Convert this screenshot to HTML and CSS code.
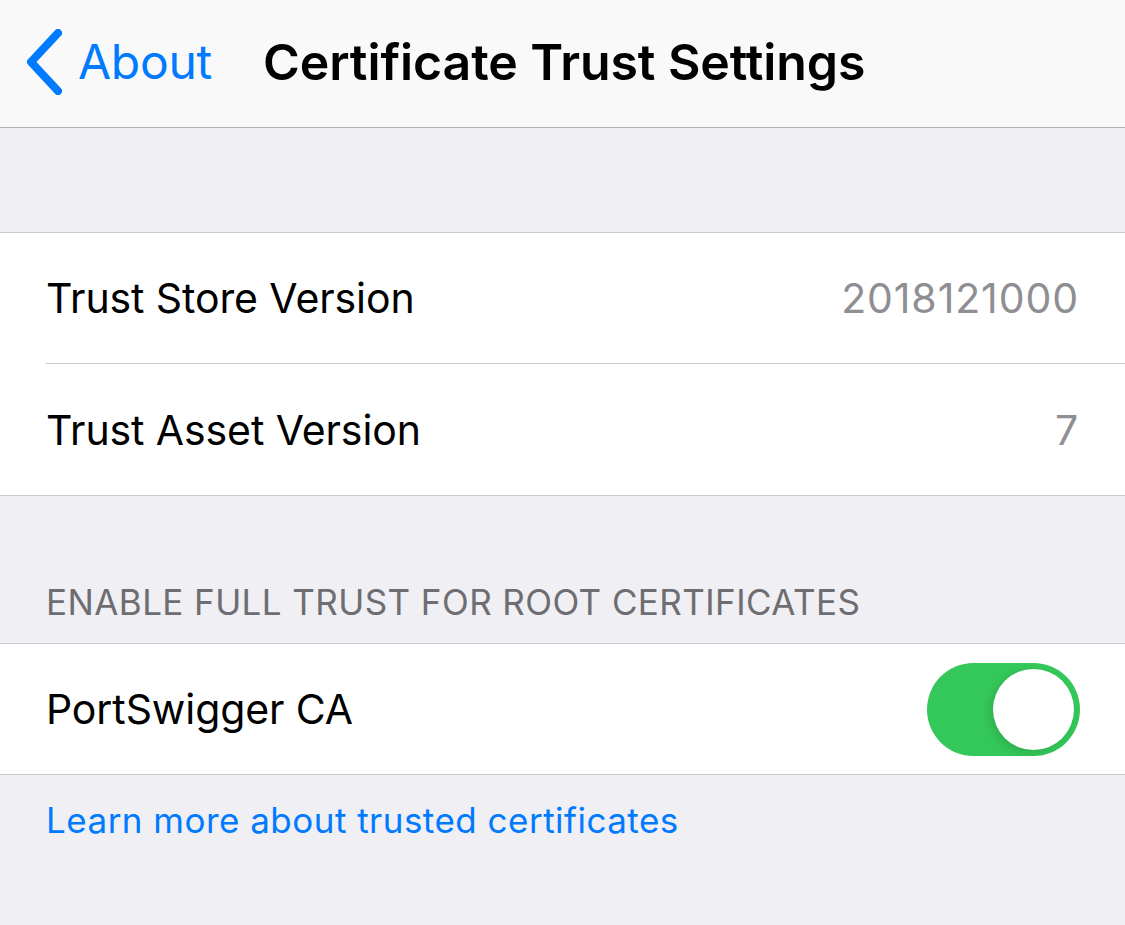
FILE: index.html
```html
<!DOCTYPE html>
<html>
<head>
<meta charset="utf-8">
<link rel="stylesheet" href="styles.css">
</head>
<body>
<header class="navbar">
  <div class="back">
    <svg class="chevron" width="40" height="66" viewBox="0 0 40 66">
      <path d="M33 4 L6 33 L33 62" fill="none" stroke="#007aff" stroke-width="8" stroke-linecap="round" stroke-linejoin="round"/>
    </svg>
    <span class="back-label">About</span>
  </div>
  <h1 class="title">Certificate Trust Settings</h1>
</header>
<div class="spacer-top"></div>
<section class="group">
  <div class="row">
    <span class="label">Trust Store Version</span>
    <span class="value">2018121000</span>
  </div>
  <div class="row">
    <span class="label">Trust Asset Version</span>
    <span class="value">7</span>
  </div>
</section>
<div class="section-header">ENABLE FULL TRUST FOR ROOT CERTIFICATES</div>
<section class="group">
  <div class="row">
    <span class="label">PortSwigger CA</span>
    <span class="toggle"><span class="knob"></span></span>
  </div>
</section>
<div class="footer"><a class="link">Learn more about trusted certificates</a></div>
</body>
</html>
```
FILE: styles.css
```css
* { box-sizing: border-box; }
html, body {
  margin: 0;
  padding: 0;
  background: #efeff4;
  font-family: Inter, "Noto Sans", sans-serif;
  width: 1125px;
  height: 925px;
  overflow: hidden;
}
.navbar {
  height: 128px;
  background: #f9f9f9;
  border-bottom: 1px solid #b2b2b2;
  display: flex;
  align-items: center;
  padding-left: 25px;
}
.back {
  display: flex;
  align-items: center;
  width: 238px;
}
.chevron {
  display: block;
  margin-top: -4px;
}
.back-label {
  color: #007aff;
  font-size: 48px;
  margin-left: 13px;
  letter-spacing: -0.3px;
  margin-top: -4px;
}
.title {
  margin: 0;
  margin-top: -4px;
  font-size: 50px;
  font-weight: 600;
  color: #000;
  letter-spacing: -0.1px;
}
.spacer-top { height: 104px; }
.group {
  background: #fff;
  border-top: 1px solid #c8c7cc;
  border-bottom: 1px solid #c8c7cc;
}
.row {
  height: 130px;
  display: flex;
  align-items: center;
  justify-content: space-between;
  padding: 0 46px;
  position: relative;
}
.row + .row { height: 132px; border-top: 1px solid #c8c7cc; margin-left: 46px; padding-left: 0; }
.label {
  font-size: 41px;
  color: #000;
  letter-spacing: -0.1px;
}
.value {
  font-size: 41px;
  color: #8e8e93;
  letter-spacing: 0.9px;
}
.section-header {
  height: 147px;
  display: flex;
  align-items: flex-end;
  padding: 0 46px 20px;
  font-size: 35px;
  color: #6d6d72;
  letter-spacing: 0.42px;
}
.toggle {
  width: 153px;
  height: 93px;
  border-radius: 47px;
  background: #34c759;
  display: flex;
  align-items: center;
  justify-content: flex-end;
  padding-right: 6px;
  margin-right: -1px;
}
.knob {
  width: 81px;
  height: 81px;
  border-radius: 50%;
  background: #fff;
  box-shadow: -3px 3px 8px rgba(0,0,0,0.12);
}
.footer {
  padding: 24px 46px 0;
}
.link {
  color: #007aff;
  font-size: 35px;
  letter-spacing: 0.48px;
}
```
